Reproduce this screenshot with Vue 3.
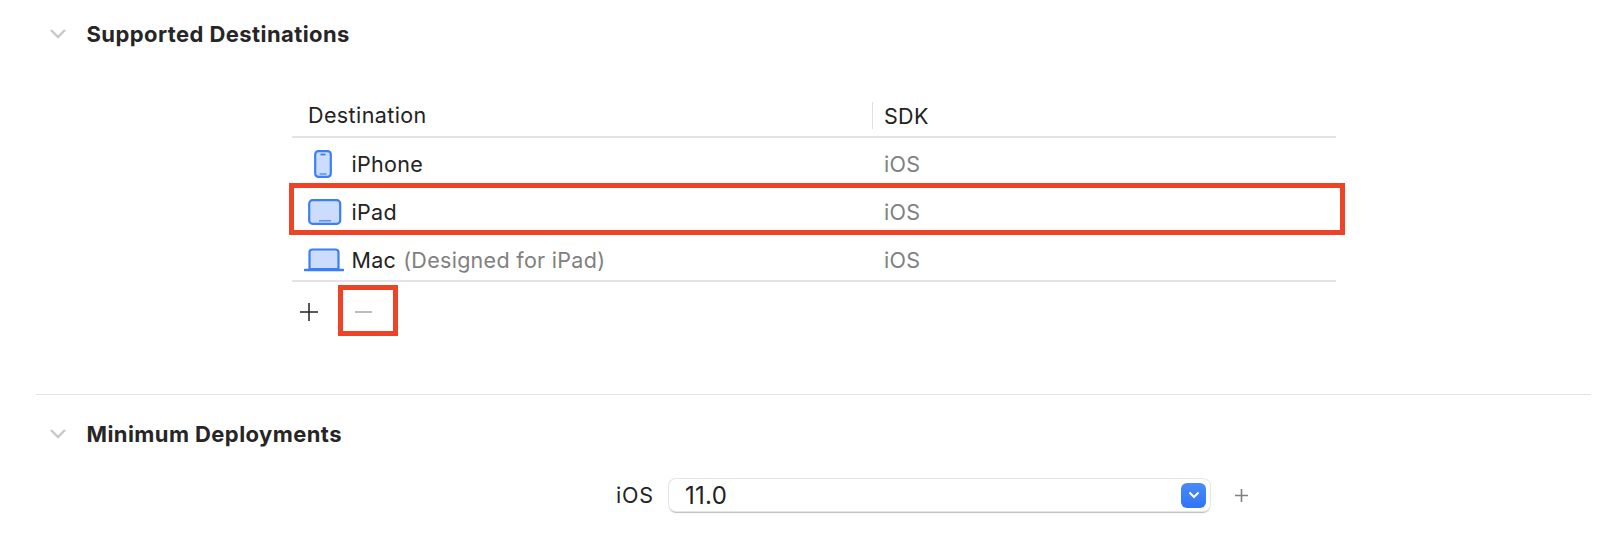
<template>
  <div class="page">
    <section class="section first">
      <div class="heading">
        <svg class="chevron" width="18" height="12" viewBox="0 0 18 12">
          <path d="M2 2l7 7 7-7" fill="none" stroke="#c8c8c8" stroke-width="2.4" />
        </svg>
        <h2>Supported Destinations</h2>
      </div>

      <div class="table">
        <div class="thead">
          <div class="col-name">Destination</div>
          <div class="col-sdk">SDK</div>
        </div>
        <div class="rows">
          <div v-for="row in rows" :key="row.name" class="row">
            <div class="col-name">
              <span class="icon">
                <svg v-if="row.icon === 'phone'" class="phone" width="18" height="28" viewBox="0 0 18 28">
                  <rect x="1.2" y="1.2" width="15.6" height="25.6" rx="3.2" fill="#cbdcfc" stroke="#3b7ff8" stroke-width="2.2" />
                  <path d="M6.5 4.5h5" stroke="#3b7ff8" stroke-width="1.8" />
                  <path d="M5.5 24h7" stroke="#3b7ff8" stroke-width="1.2" />
                </svg>
                <svg v-else-if="row.icon === 'pad'" width="34" height="26" viewBox="0 0 34 26">
                  <rect x="1.2" y="1.2" width="31" height="23.6" rx="3.4" fill="#cbdcfc" stroke="#3b7ff8" stroke-width="2.2" />
                  <path d="M11 21.8h12" stroke="#3b7ff8" stroke-width="1.2" />
                </svg>
                <svg v-else class="mac" width="40" height="24" viewBox="0 0 40 24">
                  <path d="M5.5 21V4.5a3 3 0 0 1 3-3h23a3 3 0 0 1 3 3V21z" fill="#cbdcfc" stroke="#3b7ff8" stroke-width="2.2" />
                  <path d="M1 22h38" stroke="#3b7ff8" stroke-width="2.6" stroke-linecap="round" />
                </svg>
              </span>
              <span>{{ row.name }}</span>
              <span v-if="row.note" class="note">{{ row.note }}</span>
            </div>
            <div class="col-sdk muted">iOS</div>
            <div v-if="row.marked" class="mark mark-row"></div>
          </div>
        </div>
        <div class="buttons">
          <svg width="18" height="18" viewBox="0 0 18 18">
            <path d="M9 0v18M0 9h18" stroke="#222" stroke-width="1.5" />
          </svg>
          <div class="minus">
            <span class="minus-bar"></span>
            <div class="mark mark-minus"></div>
          </div>
        </div>
      </div>
    </section>

    <section class="section second">
      <div class="heading">
        <svg class="chevron" width="18" height="12" viewBox="0 0 18 12">
          <path d="M2 2l7 7 7-7" fill="none" stroke="#c8c8c8" stroke-width="2.4" />
        </svg>
        <h2>Minimum Deployments</h2>
      </div>
      <div class="deploy">
        <span class="deploy-label">iOS</span>
        <div class="select">
          <span>11.0</span>
          <span class="select-btn">
            <svg width="12" height="8" viewBox="0 0 12 8">
              <path d="M1.5 1.5L6 6l4.5-4.5" fill="none" stroke="#fff" stroke-width="2" />
            </svg>
          </span>
        </div>
        <svg class="deploy-add" width="13" height="13" viewBox="0 0 13 13">
          <path d="M6.5 0v13M0 6.5h13" stroke="#808080" stroke-width="1.6" />
        </svg>
      </div>
    </section>
  </div>
</template>

<script setup>
const rows = [
  { name: "iPhone", icon: "phone" },
  { name: "iPad", icon: "pad", marked: true },
  { name: "Mac", icon: "mac", note: "(Designed for iPad)" },
];
</script>

<style>
body {
  background: #fff;
}
</style>

<style scoped>
.page {
  width: 1622px;
  height: 538px;
  overflow: hidden;
  background: #fff;
  color: #222;
  font-family: Inter, "Noto Sans", sans-serif;
  font-size: 21.5px;
  letter-spacing: 0.3px;
}

.section {
  margin: 0 31px 0 36px;
}

.first {
  height: 395px;
  padding-top: 21px;
  box-sizing: border-box;
  border-bottom: 1px solid #e4e4e4;
}

.second {
  padding-top: 26px;
}

.heading {
  display: flex;
  align-items: center;
  height: 26px;
  padding-left: 13px;
}

.chevron {
  margin-right: 19.5px;
}

h2 {
  margin: 0;
  font-size: 22px;
  font-weight: 700;
  letter-spacing: 0.42px;
  color: #262626;
}

.table {
  width: 1044px;
  margin: 48px 0 0 256px;
}

.thead,
.row {
  display: flex;
  align-items: center;
}

.thead {
  height: 41px;
  border-bottom: 2px solid #e4e4e4;
}

.thead .col-name {
  padding-left: 16px;
  border-right: 1px solid #e0e0e0;
  height: 27px;
  line-height: 29px;
  letter-spacing: 0.4px;
}

.rows {
  padding-top: 2px;
}

.row {
  position: relative;
  height: 48px;
}

.row:last-child {
  margin-bottom: -4px;
}

.col-name {
  width: 581px;
  box-sizing: border-box;
  display: flex;
  align-items: center;
}

.col-sdk {
  padding-left: 11px;
}

.muted {
  color: #808080;
}

.icon {
  width: 66px;
  flex: none;
  display: flex;
  justify-content: center;
  margin-right: -6.5px;
}

.phone {
  margin-right: 5px;
}

.mac {
  margin-left: -3px;
}

.note {
  margin-left: 7px;
  color: #808080;
}

.buttons {
  position: relative;
  display: flex;
  align-items: center;
  height: 60px;
  padding-left: 8px;
  border-top: 2px solid #e4e4e4;
}

.minus {
  position: relative;
  display: flex;
  justify-content: center;
  width: 60px;
  margin-left: 20px;
  padding-right: 10px;
  box-sizing: border-box;
}

.minus-bar {
  width: 17px;
  height: 2px;
  background: #bdbdbd;
}

.mark {
  position: absolute;
  box-sizing: border-box;
  border: 5px solid #ee4326;
}

.mark-row {
  left: -3px;
  top: -5px;
  width: 1056px;
  height: 52px;
}

.mark-minus {
  left: 0;
  top: -26px;
  width: 60px;
  height: 51px;
}

.deploy {
  display: flex;
  align-items: center;
  height: 32px;
  margin: 32px 0 0 580px;
}

.deploy-label {
  width: 53px;
  letter-spacing: 0.8px;
}

.select {
  width: 541px;
  height: 32px;
  box-sizing: border-box;
  display: flex;
  align-items: center;
  justify-content: space-between;
  padding: 0 4px 0 16px;
  border-radius: 7px;
  background: #fff;
  box-shadow: 0 0 0 1px #e6e6e6, 0 2px 1px #bdbdbd;
  font-size: 24px;
}

.select-btn {
  display: flex;
  align-items: center;
  justify-content: center;
  width: 25px;
  height: 25px;
  border-radius: 6px;
  background: linear-gradient(#4a8bf8, #2f74f6);
}

.deploy-add {
  margin-left: 25px;
}
</style>
